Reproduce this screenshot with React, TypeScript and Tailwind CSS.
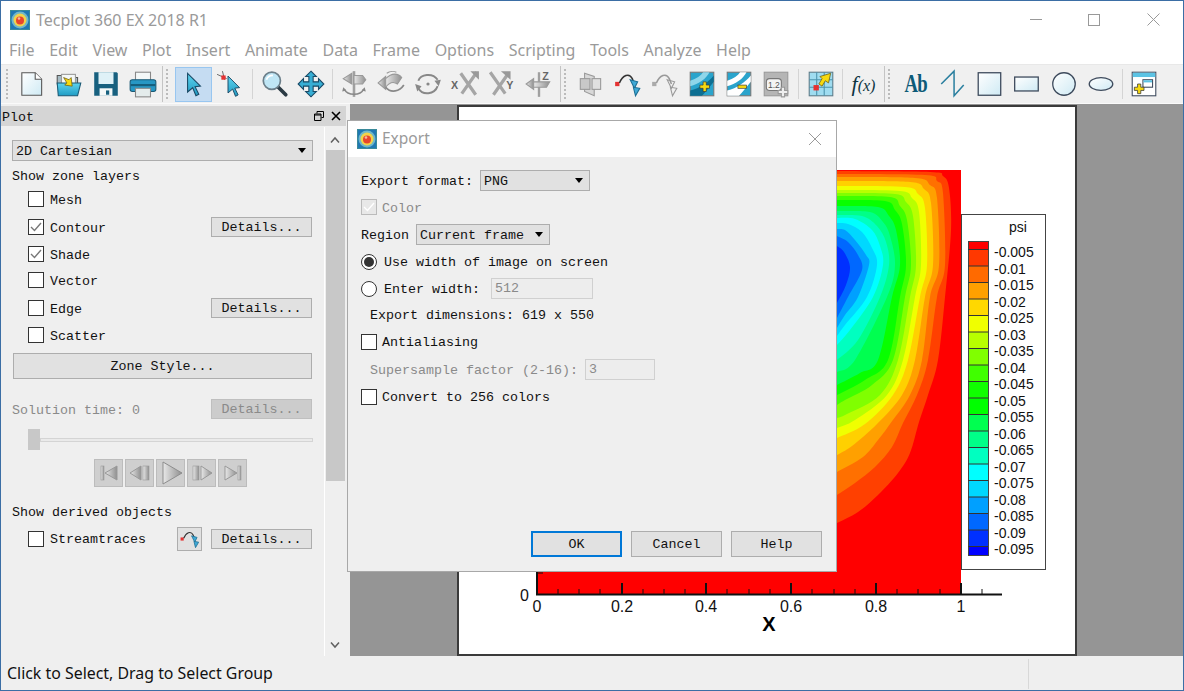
import type { ReactNode } from "react";

// contour band edges in page coordinates, outer to inner
const bands: [string, number[][]][] = [
  ["#ff4000", [[837,171],[930,172],[943,176],[949,188],[951,230],[945,297],[938,360],[928,395],[919,422],[910,453],[898,473],[878,495],[858,512],[837,523]]],
  ["#ff7000", [[837,174],[925,175],[937,181],[943,193],[945,265],[937,297],[928,360],[917,395],[903,423],[892,447],[875,467],[855,483],[837,495]]],
  ["#ffa000", [[837,177],[915,178],[930,185],[937,198],[939,265],[930,297],[922,360],[910,395],[890,424],[878,440],[863,457],[837,472]]],
  ["#ffd000", [[837,181],[910,182],[924,189],[931,203],[933,265],[925,297],[915,360],[902,395],[877,424],[852,446],[837,455]]],
  ["#f0ff00", [[837,186],[905,187],[918,194],[925,208],[927,265],[920,297],[908,360],[893,395],[865,424],[837,438]]],
  ["#b8ff00", [[837,190],[900,191],[912,198],[919,212],[921,265],[915,297],[903,360],[887,395],[855,420],[837,428]]],
  ["#80ff00", [[837,193],[895,194],[906,202],[913,216],[916,265],[910,297],[898,360],[880,395],[847,414],[837,418]]],
  ["#40ff00", [[837,196],[890,197],[900,206],[907,220],[911,265],[905,297],[893,360],[872,385],[845,400],[837,405]]],
  ["#08ff00", [[837,200],[885,201],[895,210],[902,224],[906,265],[900,297],[888,360],[865,380],[837,395]]],
  ["#00ff50", [[837,206],[878,207],[889,216],[896,230],[900,265],[892,297],[878,360],[860,373],[837,385]]],
  ["#00ff88", [[837,211],[870,212],[883,222],[890,236],[895,265],[887,297],[855,360],[837,372]]],
  ["#00ffc0", [[837,215],[862,216],[877,226],[886,242],[889,265],[880,297],[858,340],[837,360]]],
  ["#00ffff", [[837,218],[855,219],[872,230],[880,246],[883,265],[873,297],[850,330],[837,345]]],
  ["#00d8ff", [[837,223],[848,224],[862,232],[872,248],[877,265],[867,297],[845,325],[837,336]]],
  ["#00a0ff", [[837,229],[845,230],[855,240],[866,255],[869,265],[858,297],[845,315],[837,328]]],
  ["#0068ff", [[837,236],[848,242],[858,255],[862,270],[848,297],[837,318]]],
  ["#0030ff", [[837,246],[844,252],[850,267],[846,285],[837,303]]],
];

const legendColors = [
  "#ff0000","#ff3800","#ff6a00","#ffa000","#ffd800","#f0ff00","#b8ff00","#80ff00","#40ff00","#10ff00",
  "#00ff00","#00ff50","#00ff88","#00ffc0","#00ffff","#00d8ff","#00a0ff","#0068ff","#0030ff","#0000ff",
];

const legendLabels = [
  "-0.005","-0.01","-0.015","-0.02","-0.025","-0.03","-0.035","-0.04","-0.045","-0.05",
  "-0.055","-0.06","-0.065","-0.07","-0.075","-0.08","-0.085","-0.09","-0.095",
];

const menus = ["File","Edit","View","Plot","Insert","Animate","Data","Frame","Options","Scripting","Tools","Analyze","Help"];

// catmull-rom through the points, closed off under the dialog
function bandPath(pts: number[][]) {
  let d = `M800 ${pts[0][1]} L${pts[0][0]} ${pts[0][1]}`;
  for (let i = 0; i < pts.length - 1; i++) {
    const p0 = pts[i - 1] || pts[i];
    const p1 = pts[i];
    const p2 = pts[i + 1];
    const p3 = pts[i + 2] || p2;
    d += ` C${p1[0] + (p2[0] - p0[0]) / 6} ${p1[1] + (p2[1] - p0[1]) / 6} ${p2[0] - (p3[0] - p1[0]) / 6} ${p2[1] - (p3[1] - p1[1]) / 6} ${p2[0]} ${p2[1]}`;
  }
  return d + ` L800 ${pts[pts.length - 1][1]} Z`;
}

function Logo() {
  return (
    <svg width="20" height="20" viewBox="0 0 20 20" className="shrink-0">
      <rect x="0.5" y="0.5" width="19" height="19" fill="#1f78b4" stroke="#3a8a9a" />
      <circle cx="10" cy="10" r="8.5" fill="#6fb7c9" />
      <circle cx="10" cy="10" r="6.5" fill="#f2d24a" />
      <circle cx="10" cy="10.5" r="4" fill="#e8452c" />
      <circle cx="9" cy="8.5" r="1.3" fill="#f5b7a0" />
    </svg>
  );
}

function Ico({ children }: { children: ReactNode }) {
  return (
    <svg width="30" height="30" viewBox="0 0 28 28">
      {children}
    </svg>
  );
}

function Tool({ children, active }: { children: ReactNode; active?: boolean }) {
  return (
    <div
      className={
        active
          ? "flex h-[35px] w-[37px] shrink-0 items-center justify-center border border-[#98c6f0] bg-[#c5dcf2]"
          : "flex h-[35px] w-[37px] shrink-0 items-center justify-center"
      }
    >
      {children}
    </div>
  );
}

function Grip() {
  return <div className="h-[30px] w-[2px] shrink-0 border-l-2 border-dotted border-[#bbbbbb]" />;
}

function Sep({ w }: { w: string }) {
  return (
    <div className={`flex shrink-0 justify-center ${w}`}>
      <div className="h-[30px] w-px bg-[#d4d4d4]" />
    </div>
  );
}

function Cursor() {
  return (
    <path
      d="M8 4 L20 16 L15 16.5 L18.5 23.5 L15.8 25 L12.8 17.5 L8 21.5 Z"
      fill="url(#cy)"
      stroke="#1b4a66"
      strokeWidth="1"
    />
  );
}

function TraceIcon({ gray }: { gray?: boolean }) {
  const line = gray ? "#999" : "#333";
  return (
    <>
      <rect x="2" y="12" width="4" height="4" fill={gray ? "#aaa" : "#e53232"} />
      <path d="M6 13 C9 6 15 3 18 9 L20 14" fill="none" stroke={line} strokeWidth="1.4" />
      <path d="M16 10 L23 12 L20 18 Z" fill={gray ? "none" : "#3fa9d6"} stroke={gray ? "#999" : "#1d6f94"} />
      <path d="M19 17 L25 18 L21 25 Z" fill={gray ? "none" : "#3fa9d6"} stroke={gray ? "#999" : "#1d6f94"} />
    </>
  );
}

function ContourIcon({ minus }: { minus?: boolean }) {
  return (
    <>
      <rect x="3" y="3" width="22" height="22" fill="#2aa4cc" stroke="#777" />
      <path d="M3 11 C9 9 13 6 15 3 H21 C18 9 11 14 3 16 Z" fill={minus ? "#ffffff" : "#8fd6ea"} />
      <path d="M3 25 V20 C12 18 20 12 25 6 V12 C21 17 17 22 14 25 Z" fill={minus ? "#ffffff" : "#0d6f92"} />
      {minus ? (
        <rect x="13" y="15" width="8" height="3" fill="#f6d90f" stroke="#333" strokeWidth="0.6" />
      ) : (
        <path d="M15 12 h3 v3 h3 v3 h-3 v3 h-3 v-3 h-3 v-3 h3 z" fill="#f6d90f" stroke="#333" strokeWidth="0.6" />
      )}
    </>
  );
}

function Toolbar() {
  return (
    <div className="flex h-[39px] items-center border-t border-[#e8e8e8] bg-[#f0f0f0]">
      <div className="flex w-[12px] shrink-0 justify-center">
        <Grip />
      </div>
      <Tool>
        <Ico>
          <defs>
            <linearGradient id="pg" x1="0" y1="0" x2="1" y2="1">
              <stop offset="0" stopColor="#ffffff" />
              <stop offset="1" stopColor="#cfeaf4" />
            </linearGradient>
            <linearGradient id="cy" x1="0" y1="0" x2="0" y2="1">
              <stop offset="0" stopColor="#5fd3ee" />
              <stop offset="1" stopColor="#1f9cc4" />
            </linearGradient>
            <linearGradient id="gr" x1="0" y1="0" x2="1" y2="0">
              <stop offset="0" stopColor="#e8e8e8" />
              <stop offset="1" stopColor="#8f8f8f" />
            </linearGradient>
          </defs>
          <path d="M4.5 3.5 H17 L23 9.5 V24.5 H4.5 Z" fill="url(#pg)" stroke="#555" />
          <path d="M17 3.5 V9.5 H23" fill="#fff" stroke="#555" />
        </Ico>
      </Tool>
      <Tool>
        <Ico>
          <path d="M3 6 H10 L12 8 H22 V14 H3 Z" fill="#a7bcc4" stroke="#555" />
          <rect x="7" y="5" width="13" height="10" fill="#f4f8f8" stroke="#999" />
          <path d="M3 13 H25 L22 25 H4 Z" fill="url(#cy)" stroke="#1b5a75" />
          <path d="M9 8 L14 10 L16 8 L17 16 L10 15 L12 13 Z" fill="#f6d90f" stroke="#6b5a10" strokeWidth="0.7" />
        </Ico>
      </Tool>
      <Tool>
        <Ico>
          <path d="M3 3 H24 L25 4 V25 H3 Z" fill="#17607f" />
          <rect x="7" y="3" width="14" height="11" fill="#dff1f7" />
          <rect x="8" y="18" width="12" height="7" fill="#f4f8f8" />
          <rect x="14" y="20" width="3" height="4" fill="#17607f" />
        </Ico>
      </Tool>
      <Tool>
        <Ico>
          <rect x="7" y="3" width="14" height="8" fill="#f4f8f8" stroke="#888" />
          <rect x="2" y="10" width="24" height="11" rx="2" fill="#2797c4" stroke="#1b5a75" />
          <rect x="2.5" y="14" width="23" height="2" fill="#155f7e" />
          <rect x="7" y="18" width="14" height="8" fill="#e4ecec" stroke="#888" />
        </Ico>
      </Tool>
      <div className="flex w-[14px] shrink-0 items-center gap-[3px] pl-[1px]">
        <div className="h-[36px] w-px bg-[#c4c4c4]" />
        <Grip />
      </div>
      <Tool active>
        <Ico>
          <Cursor />
        </Ico>
      </Tool>
      <Tool>
        <Ico>
          <path d="M1 5 L10 9 M6 2 L8 10" stroke="#555" strokeWidth="0.8" />
          <rect x="5" y="6" width="4" height="4" fill="#e53232" />
          <g transform="translate(4 3) scale(0.9)">
            <Cursor />
          </g>
        </Ico>
      </Tool>
      <Sep w="w-[6px]" />
      <Tool>
        <Ico>
          <path d="M18 17 L25 24" stroke="#2b3a44" strokeWidth="3.4" strokeLinecap="round" />
          <circle cx="12" cy="11" r="8" fill="#bfe6f5" stroke="#6c7f8a" strokeWidth="1.6" />
          <path d="M7 10 C8 7 10 6 13 6" fill="none" stroke="#fff" strokeWidth="1.6" />
        </Ico>
      </Tool>
      <Tool>
        <Ico>
          <path
            d="M14 2 L19 7 H16 V12 H21 V9 L26 14 L21 19 V16 H16 V21 H19 L14 26 L9 21 H12 V16 H7 V19 L2 14 L7 9 V12 H12 V7 H9 Z"
            fill="#37aed4"
            stroke="#1a4a66"
          />
        </Ico>
      </Tool>
      <Sep w="w-[6px]" />
      <Tool>
        <Ico>
          <path d="M14 2 V26" stroke="#a0a0a0" strokeWidth="2.4" />
          <path d="M4 9 L12 4 V14 Z" fill="url(#gr)" stroke="#999" />
          <path d="M14 6 H22 L25 10 L22 14 H14 Z" fill="url(#gr)" stroke="#999" />
          <path d="M5 19 C8 25 20 25 23 19" fill="none" stroke="#888" strokeWidth="1.3" />
          <path d="M4 17 L7 20 L3 21 Z M24 17 L21 20 L25 21 Z" fill="#888" />
        </Ico>
      </Tool>
      <Tool>
        <Ico>
          <path d="M2 13 L9 7 L9 19 Z" fill="url(#gr)" stroke="#999" />
          <path d="M9 9 C15 3 21 4 24 8 L20 14 C16 11 12 13 9 17 Z" fill="url(#gr)" stroke="#999" />
          <path d="M9 17 C14 23 22 21 26 15" fill="none" stroke="#888" strokeWidth="1.6" />
          <path d="M10 4 C13 2 17 2 19 3" fill="none" stroke="#999" />
        </Ico>
      </Tool>
      <Tool>
        <Ico>
          <path d="M5 11 C7 5 18 3 23 10" fill="none" stroke="#888" strokeWidth="1.8" />
          <path d="M23 16 C20 24 9 25 5 18" fill="none" stroke="#888" strokeWidth="1.8" />
          <path d="M20 11 L26 10 L24 16 Z M2 14 L8 16 L4 21 Z" fill="#888" />
          <circle cx="14" cy="14" r="1.5" fill="#888" />
        </Ico>
      </Tool>
      <Tool>
        <Ico>
          <path d="M25 3 L11 23 M10 4 L24 24" stroke="#a5a5a5" strokeWidth="3" />
          <path d="M19 2 H27 V10 Z" fill="#999" />
          <text x="1" y="19" fontSize="10" fontWeight="700" fill="#666" fontFamily="Liberation Sans, sans-serif">X</text>
        </Ico>
      </Tool>
      <Tool>
        <Ico>
          <path d="M3 3 L17 23 M20 4 L6 24" stroke="#a5a5a5" strokeWidth="3" />
          <path d="M13 2 H22 V10 Z" fill="#999" />
          <text x="18" y="19" fontSize="10" fontWeight="700" fill="#666" fontFamily="Liberation Sans, sans-serif">Y</text>
        </Ico>
      </Tool>
      <Tool>
        <Ico>
          <path d="M14 3 V26" stroke="#a0a0a0" strokeWidth="2.2" />
          <path d="M2 14 L9 9 V19 Z" fill="url(#gr)" stroke="#999" />
          <path d="M9 12 H24 L21 17 H9 Z" fill="url(#gr)" stroke="#999" />
          <text x="17" y="10" fontSize="10" fontWeight="700" fill="#666" fontFamily="Liberation Sans, sans-serif">Z</text>
        </Ico>
      </Tool>
      <div className="flex w-[15px] shrink-0 items-center gap-[3px] pl-[3px]">
        <div className="h-[36px] w-px bg-[#c4c4c4]" />
        <Grip />
      </div>
      <Tool>
        <Ico>
          <path d="M8 4 L17 7 V25 L8 21 Z" fill="#d8d8d8" stroke="#999" />
          <rect x="4" y="9" width="9" height="10" fill="#c8c8c8" stroke="#999" />
          <rect x="15" y="9" width="8" height="10" fill="#e0e0e0" stroke="#999" />
        </Ico>
      </Tool>
      <Tool>
        <Ico>
          <TraceIcon />
        </Ico>
      </Tool>
      <Tool>
        <Ico>
          <TraceIcon gray />
        </Ico>
      </Tool>
      <Tool>
        <Ico>
          <ContourIcon />
        </Ico>
      </Tool>
      <Tool>
        <Ico>
          <ContourIcon minus />
        </Ico>
      </Tool>
      <Tool>
        <Ico>
          <rect x="3" y="3" width="22" height="22" fill="#b5b5b5" stroke="#999" />
          <rect x="5" y="9" width="14" height="11" rx="3" fill="#f4f4f4" stroke="#777" />
          <text x="6.5" y="18" fontSize="8" fill="#555" fontFamily="Liberation Sans, sans-serif">1.2</text>
          <path d="M19 17 h3 v3 h3 v3 h-3 v3 h-3 v-3 h-3 v-3 h3 z" fill="#eee" stroke="#999" />
        </Ico>
      </Tool>
      <Sep w="w-[8px]" />
      <Tool>
        <Ico>
          <rect x="3" y="3" width="22" height="22" fill="#9fdcf0" stroke="#5d7b88" />
          <path d="M3 10 H25 M3 17 H25 M10 3 V25 M17 3 V25" stroke="#4c94ad" />
          <rect x="7" y="15" width="5" height="5" fill="#e53232" />
          <path d="M12 14 L15 9 L13 7 L23 4 L21 13 L18 11 L15 16 Z" fill="#f6d90f" stroke="#6b5a10" strokeWidth="0.7" />
        </Ico>
      </Tool>
      <Sep w="w-[6px]" />
      <Tool>
        <span className="font-['Liberation_Serif',serif] text-[22px] italic leading-none text-[#0d3442]">
          f<span className="text-[16px]">(x)</span>
        </span>
      </Tool>
      <div className="flex w-[15px] shrink-0 items-center gap-[3px] pl-[2px]">
        <div className="h-[36px] w-px bg-[#c4c4c4]" />
        <Grip />
      </div>
      <Tool>
        <span className="scale-x-[0.72] font-['Liberation_Serif',serif] text-[26px] font-bold leading-none tracking-[-1px] text-[#0d5a78]">
          Ab
        </span>
      </Tool>
      <Tool>
        <Ico>
          <path d="M3 14 L15 2 V25 L24 15" fill="none" stroke="#2a7f9f" strokeWidth="1.4" />
        </Ico>
      </Tool>
      <Tool>
        <Ico>
          <rect x="3" y="3.5" width="21" height="21" fill="url(#pg)" stroke="#3d4a5c" strokeWidth="1.2" />
        </Ico>
      </Tool>
      <Tool>
        <Ico>
          <rect x="2.5" y="7.5" width="22" height="13" fill="url(#pg)" stroke="#3d4a5c" strokeWidth="1.2" />
        </Ico>
      </Tool>
      <Tool>
        <Ico>
          <circle cx="14" cy="14" r="10.5" fill="url(#pg)" stroke="#3d4a5c" strokeWidth="1.2" />
        </Ico>
      </Tool>
      <Tool>
        <Ico>
          <ellipse cx="14" cy="14" rx="11" ry="6" fill="url(#pg)" stroke="#3d4a5c" strokeWidth="1.2" />
        </Ico>
      </Tool>
      <Sep w="w-[6px]" />
      <Tool>
        <Ico>
          <rect x="3" y="3" width="22" height="22" fill="#fff" stroke="#3d4a5c" />
          <rect x="3.5" y="3.5" width="21" height="4" fill="#5cc3e4" />
          <rect x="13" y="10" width="9" height="7" fill="#fff" stroke="#3d4a5c" />
          <rect x="13.5" y="10.5" width="8" height="2" fill="#5cc3e4" />
          <path d="M8 14 h3 v3 h3 v3 h-3 v3 h-3 v-3 h-3 v-3 h3 z" fill="#f6d90f" stroke="#333" strokeWidth="0.7" />
        </Ico>
      </Tool>
    </div>
  );
}

function Check({ on, off }: { on?: boolean; off?: boolean }) {
  return (
    <span
      className={
        off
          ? "flex h-[16px] w-[16px] shrink-0 items-center justify-center border border-[#bbbbbb] bg-[#e8e8e8]"
          : "flex h-[16px] w-[16px] shrink-0 items-center justify-center border border-[#333333] bg-white"
      }
    >
      {on && (
        <svg width="12" height="10" viewBox="0 0 12 10">
          <path d="M1 5 L4.5 8.5 L11 1" fill="none" stroke={off ? "#ffffff" : "#777777"} strokeWidth="1.4" />
        </svg>
      )}
    </span>
  );
}

function Radio({ on }: { on?: boolean }) {
  return (
    <span className="flex h-[16px] w-[16px] shrink-0 items-center justify-center rounded-full border border-[#333333] bg-white">
      {on && <span className="h-[10px] w-[10px] rounded-full bg-[#333333]" />}
    </span>
  );
}

function Btn({ label, className, off }: { label: string; className: string; off?: boolean }) {
  return (
    <div
      className={`flex shrink-0 items-center justify-center border pt-[1px] ${
        off ? "border-[#bfbfbf] bg-[#cccccc] text-[#8a8a8a]" : "border-[#adadad] bg-[#e1e1e1]"
      } ${className}`}
    >
      {label}
    </div>
  );
}

function Combo({ label, className }: { label: string; className: string }) {
  return (
    <div className={`flex shrink-0 items-center justify-between border border-[#adadad] bg-[#e1e1e1] pl-[3px] pr-[6px] ${className}`}>
      <span className="pt-[2px]">{label}</span>
      <span className="h-0 w-0 border-x-[4px] border-t-[5px] border-x-transparent border-t-black" />
    </div>
  );
}

function Layer({ label, on, details, mt }: { label: string; on?: boolean; details?: boolean; mt: string }) {
  return (
    <div className={`flex h-[20px] w-[300px] items-center pl-[16px] ${mt}`}>
      <Check on={on} />
      <span className="ml-[6px] pt-[3px]">{label}</span>
      {details && <Btn label="Details..." className="ml-auto h-[20px] w-[101px]" />}
    </div>
  );
}

function Media({ children }: { children: ReactNode }) {
  return (
    <div className="flex h-[28px] w-[29px] shrink-0 items-center justify-center border border-[#bcbcbc] bg-[#cfcfcf]">
      <svg width="24" height="24" viewBox="0 0 24 24">
        {children}
      </svg>
    </div>
  );
}

function PlotPanel() {
  return (
    <div className="flex w-[349px] shrink-0 flex-col bg-[#efefef]">
      <div className="mt-[2px] mr-[4px] flex h-[20px] shrink-0 items-center bg-[#d5d5d5] pl-[1px] pr-[5px]">
        <span className="pt-[3px]">Plot</span>
        <svg width="10" height="10" viewBox="0 0 10 10" className="ml-auto">
          <path d="M3 2.5 V0.5 H9.5 V6.5 H7.5 M0.5 3 H7 V9.5 H0.5 Z" fill="none" stroke="#000" />
          <path d="M0.5 4 H7" stroke="#000" />
        </svg>
        <svg width="10" height="10" viewBox="0 0 10 10" className="ml-[7px]">
          <path d="M1 1 L9 9 M9 1 L1 9" stroke="#000" strokeWidth="1.6" />
        </svg>
      </div>
      <div className="flex min-h-0 flex-1 pt-[1px]">
        <div className="w-[323px] shrink-0 pl-[11px]">
          <Combo label="2D Cartesian" className="mt-[13px] h-[21px] w-[301px]" />
          <div className="mt-[6px] flex h-[18px] items-center pt-[2px]">Show zone layers</div>
          <Layer label="Mesh" mt="mt-[4px]" />
          <Layer label="Contour" on details mt="mt-[8px]" />
          <Layer label="Shade" on mt="mt-[7px]" />
          <Layer label="Vector" mt="mt-[6px]" />
          <Layer label="Edge" details mt="mt-[8px]" />
          <Layer label="Scatter" mt="mt-[7px]" />
          <Btn label="Zone Style..." className="mt-[8px] ml-[1px] h-[26px] w-[299px]" />
          <div className="mt-[20px] flex h-[20px] w-[300px] items-center justify-between text-[#8a8a8a]">
            <span className="pt-[4px]">Solution time: 0</span>
            <Btn label="Details..." off className="h-[20px] w-[101px]" />
          </div>
          <div className="relative mt-[10px] flex h-[21px] w-[301px] items-center pl-[16px]">
            <div className="h-[21px] w-[12px] shrink-0 bg-[#c8c8c8]" />
            <div className="h-[4px] flex-1 border border-[#d4d4d4] bg-[#eaeaea]" />
          </div>
          <div className="mt-[9px] ml-[82px] flex gap-[2px]">
            <Media>
              <rect x="4" y="5" width="3" height="14" fill="url(#gr)" stroke="#999" strokeWidth="0.6" />
              <path d="M20 5 V19 L8 12 Z" fill="url(#gr)" stroke="#999" />
            </Media>
            <Media>
              <path d="M13 5 V19 L2 12 Z" fill="url(#gr)" stroke="#999" />
              <rect x="15" y="5" width="6" height="14" fill="url(#gr)" stroke="#999" strokeWidth="0.6" />
            </Media>
            <Media>
              <path d="M4 1 V23 L23 12 Z" fill="url(#gr)" stroke="#8d8d8d" />
            </Media>
            <Media>
              <rect x="3" y="5" width="6" height="14" fill="url(#gr)" stroke="#999" strokeWidth="0.6" />
              <path d="M11 5 V19 L22 12 Z" fill="url(#gr)" stroke="#999" />
            </Media>
            <Media>
              <path d="M4 5 V19 L16 12 Z" fill="url(#gr)" stroke="#999" />
              <rect x="17" y="5" width="3" height="14" fill="url(#gr)" stroke="#999" strokeWidth="0.6" />
            </Media>
          </div>
          <div className="mt-[16px] flex h-[18px] items-center pt-[2px]">Show derived objects</div>
          <div className="mt-[6px] flex h-[24px] w-[300px] items-center pl-[16px]">
            <Check />
            <span className="ml-[6px] pt-[2px]">Streamtraces</span>
            <div className="ml-auto flex h-[24px] w-[25px] items-center justify-center border border-[#adadad] bg-[#e1e1e1]">
              <svg width="22" height="22" viewBox="0 0 28 28">
                <TraceIcon />
              </svg>
            </div>
            <Btn label="Details..." className="ml-[9px] h-[20px] w-[101px]" />
          </div>
        </div>
        <div className="flex w-[21px] shrink-0 flex-col items-center border-l border-white">
          <svg width="12" height="8" viewBox="0 0 12 8" className="mt-[9px]">
            <path d="M2 6.5 L6 2 L10 6.5" fill="none" stroke="#606060" strokeWidth="1.5" />
          </svg>
          <div className="mt-[6px] h-[331px] w-[19px] bg-[#c8c8c8]" />
          <svg width="12" height="8" viewBox="0 0 12 8" className="mt-[160px]">
            <path d="M2 1.5 L6 6 L10 1.5" fill="none" stroke="#606060" strokeWidth="1.5" />
          </svg>
        </div>
      </div>
    </div>
  );
}

function ContourFrame() {
  const major = [537, 622, 706, 791, 876, 961];
  const minor = [558, 579, 600, 643, 664, 685, 727, 749, 770, 812, 834, 855, 897, 918, 940, 982];
  const sans = "Liberation Sans, sans-serif";
  return (
    <svg width="620" height="551" viewBox="457 105 620 551" className="ml-[107px] mt-[1px] block bg-white">
      <rect x="537" y="170" width="424" height="425" fill="#ff0000" />
      {bands.map(([color, pts]) => (
        <path key={color} d={bandPath(pts)} fill={color} />
      ))}
      <rect x="458" y="106" width="618" height="549" fill="none" stroke="#3a3a3a" strokeWidth="2" />
      {/* axes */}
      <path d="M537 170 V595 M536 594.5 H1002" stroke="#111" strokeWidth="2" fill="none" />
      <path d="M538 573 H543" stroke="#111" />
      {major.map((x) => (
        <path key={x} d={`M${x} 583 V594`} stroke="#111" strokeWidth="2" />
      ))}
      {minor.map((x) => (
        <path key={x} d={`M${x} 589 V594`} stroke="#111" />
      ))}
      <text x="529" y="601" textAnchor="end" fontSize="16" fontFamily={sans} fill="#111">0</text>
      {["0", "0.2", "0.4", "0.6", "0.8", "1"].map((t, i) => (
        <text key={t} x={major[i]} y="612" textAnchor="middle" fontSize="16" fontFamily={sans} fill="#111">
          {t}
        </text>
      ))}
      <text x="769" y="631" textAnchor="middle" fontSize="20" fontWeight="700" fontFamily={sans} fill="#000">X</text>
      {/* legend */}
      <rect x="961.5" y="214.5" width="84" height="355" fill="#fff" stroke="#444" />
      <text x="1018" y="232" textAnchor="middle" fontSize="14" fontFamily={sans} fill="#111">psi</text>
      {legendColors.map((c, i) => {
        const top = i === 0 ? 241 : 249.5 + (i - 1) * 16.5;
        const h = i === 0 ? 8.5 : i === 19 ? 8.5 : 16.5;
        return <rect key={c} x="968" y={top} width="20" height={h} fill={c} />;
      })}
      <rect x="968.5" y="241.5" width="20" height="314" fill="none" stroke="#444" />
      {legendLabels.map((t, i) => (
        <g key={t}>
          <path d={`M968 ${249.5 + i * 16.5} H988`} stroke="#333" />
          <text x="994" y={257 + i * 16.5} fontSize="14" fontFamily={sans} fill="#111">
            {t}
          </text>
        </g>
      ))}
    </svg>
  );
}

function ExportDialog() {
  return (
    <div className="absolute left-[346px] top-[119px] flex h-[452px] w-[490px] flex-col border border-[#a8a8a8] bg-[#efefef]">
      <div className="flex h-[36px] shrink-0 items-center bg-white pl-[9px] pr-[14px]">
        <Logo />
        <span className="ml-[5px] font-['Noto_Sans',sans-serif] text-[15.5px] text-[#9a9a9a]">Export</span>
        <svg width="14" height="14" viewBox="0 0 14 14" className="ml-auto">
          <path d="M1 1 L13 13 M13 1 L1 13" stroke="#9a9a9a" strokeWidth="1" />
        </svg>
      </div>
      <div className="flex flex-1 flex-col pl-[13px]">
        <div className="mt-[13px] flex h-[21px] items-center">
          <span className="w-[119px] pt-[2px]">Export format:</span>
          <Combo label="PNG" className="h-[21px] w-[110px]" />
        </div>
        <div className="mt-[7px] flex h-[18px] items-center text-[#8a8a8a]">
          <Check on off />
          <span className="ml-[5px] pt-[4px]">Color</span>
        </div>
        <div className="mt-[8px] flex h-[21px] items-center">
          <span className="w-[55px] pt-[2px]">Region</span>
          <Combo label="Current frame" className="h-[21px] w-[134px]" />
        </div>
        <div className="mt-[8px] flex h-[18px] items-center">
          <Radio on />
          <span className="ml-[7px] pt-[2px]">Use width of image on screen</span>
        </div>
        <div className="mt-[6px] flex h-[23px] items-center">
          <Radio />
          <span className="ml-[7px] w-[107px] pt-[2px]">Enter width:</span>
          <div className="flex h-[21px] w-[102px] items-center border border-[#d0d0d0] bg-[#ededed] pl-[3px] pt-[1px] text-[#8a8a8a]">512</div>
        </div>
        <div className="mt-[6px] flex h-[18px] items-center pl-[9px] pt-[2px]">Export dimensions: 619 x 550</div>
        <div className="mt-[9px] flex h-[18px] items-center">
          <Check />
          <span className="ml-[5px] pt-[2px]">Antialiasing</span>
        </div>
        <div className="mt-[7px] flex h-[23px] items-center pl-[9px] text-[#8a8a8a]">
          <span className="w-[215px] pt-[2px]">Supersample factor (2-16):</span>
          <div className="flex h-[21px] w-[70px] items-center border border-[#d0d0d0] bg-[#ededed] pl-[3px] pt-[1px]">3</div>
        </div>
        <div className="mt-[7px] flex h-[18px] items-center">
          <Check />
          <span className="ml-[5px] pt-[2px]">Convert to 256 colors</span>
        </div>
        <div className="mt-[125px] flex gap-[9px] pl-[170px]">
          <Btn label="OK" className="h-[26px] w-[91px] !border-2 !border-[#0078d7]" />
          <Btn label="Cancel" className="h-[26px] w-[91px]" />
          <Btn label="Help" className="h-[26px] w-[91px]" />
        </div>
      </div>
    </div>
  );
}

export default function App() {
  return (
    <div className="relative flex h-[691px] w-[1184px] flex-col overflow-hidden border border-[#3b6ea5] bg-white font-['Liberation_Mono',monospace] text-[13.33px] leading-none text-[#111]">
      {/* TITLE */}
      <div className="flex h-[37px] shrink-0 items-center pl-[9px]">
        <Logo />
        <span className="ml-[6px] font-['Noto_Sans',sans-serif] text-[16px] text-[#9a9a9a]">Tecplot 360 EX 2018 R1</span>
        <div className="ml-auto flex items-center text-[#999999]">
          <div className="mr-[46px] h-px w-[12px] bg-[#999999]" />
          <div className="mr-[47px] h-[12px] w-[12px] border border-[#999999]" />
          <svg width="13" height="13" viewBox="0 0 13 13" className="mr-[23px]">
            <path d="M0.5 0.5 L12.5 12.5 M12.5 0.5 L0.5 12.5" stroke="#999" />
          </svg>
        </div>
      </div>
      {/* MENU */}
      <div className="flex h-[26px] shrink-0 items-center gap-[14.6px] pb-[2px] pl-[8px] font-['Noto_Sans',sans-serif] text-[16px] text-[#9a9a9a]">
        {menus.map((m) => (
          <span key={m}>{m}</span>
        ))}
      </div>
      <Toolbar />
      {/* MAIN */}
      <div className="flex h-[553px] shrink-0 border-t border-[#fafafa] bg-[#959595]">
        <PlotPanel />
        <ContourFrame />
      </div>
      {/* STATUS */}
      <div className="flex min-h-0 flex-1 items-center bg-[#efefef] pl-[6px] pt-[1px] font-['Noto_Sans',sans-serif] text-[15.9px] text-[#111]">
        <span>Click to Select, Drag to Select Group</span>
        <div className="ml-auto mr-[154px] h-[30px] w-px bg-[#d8d8d8]" />
      </div>
      <ExportDialog />
    </div>
  );
}
